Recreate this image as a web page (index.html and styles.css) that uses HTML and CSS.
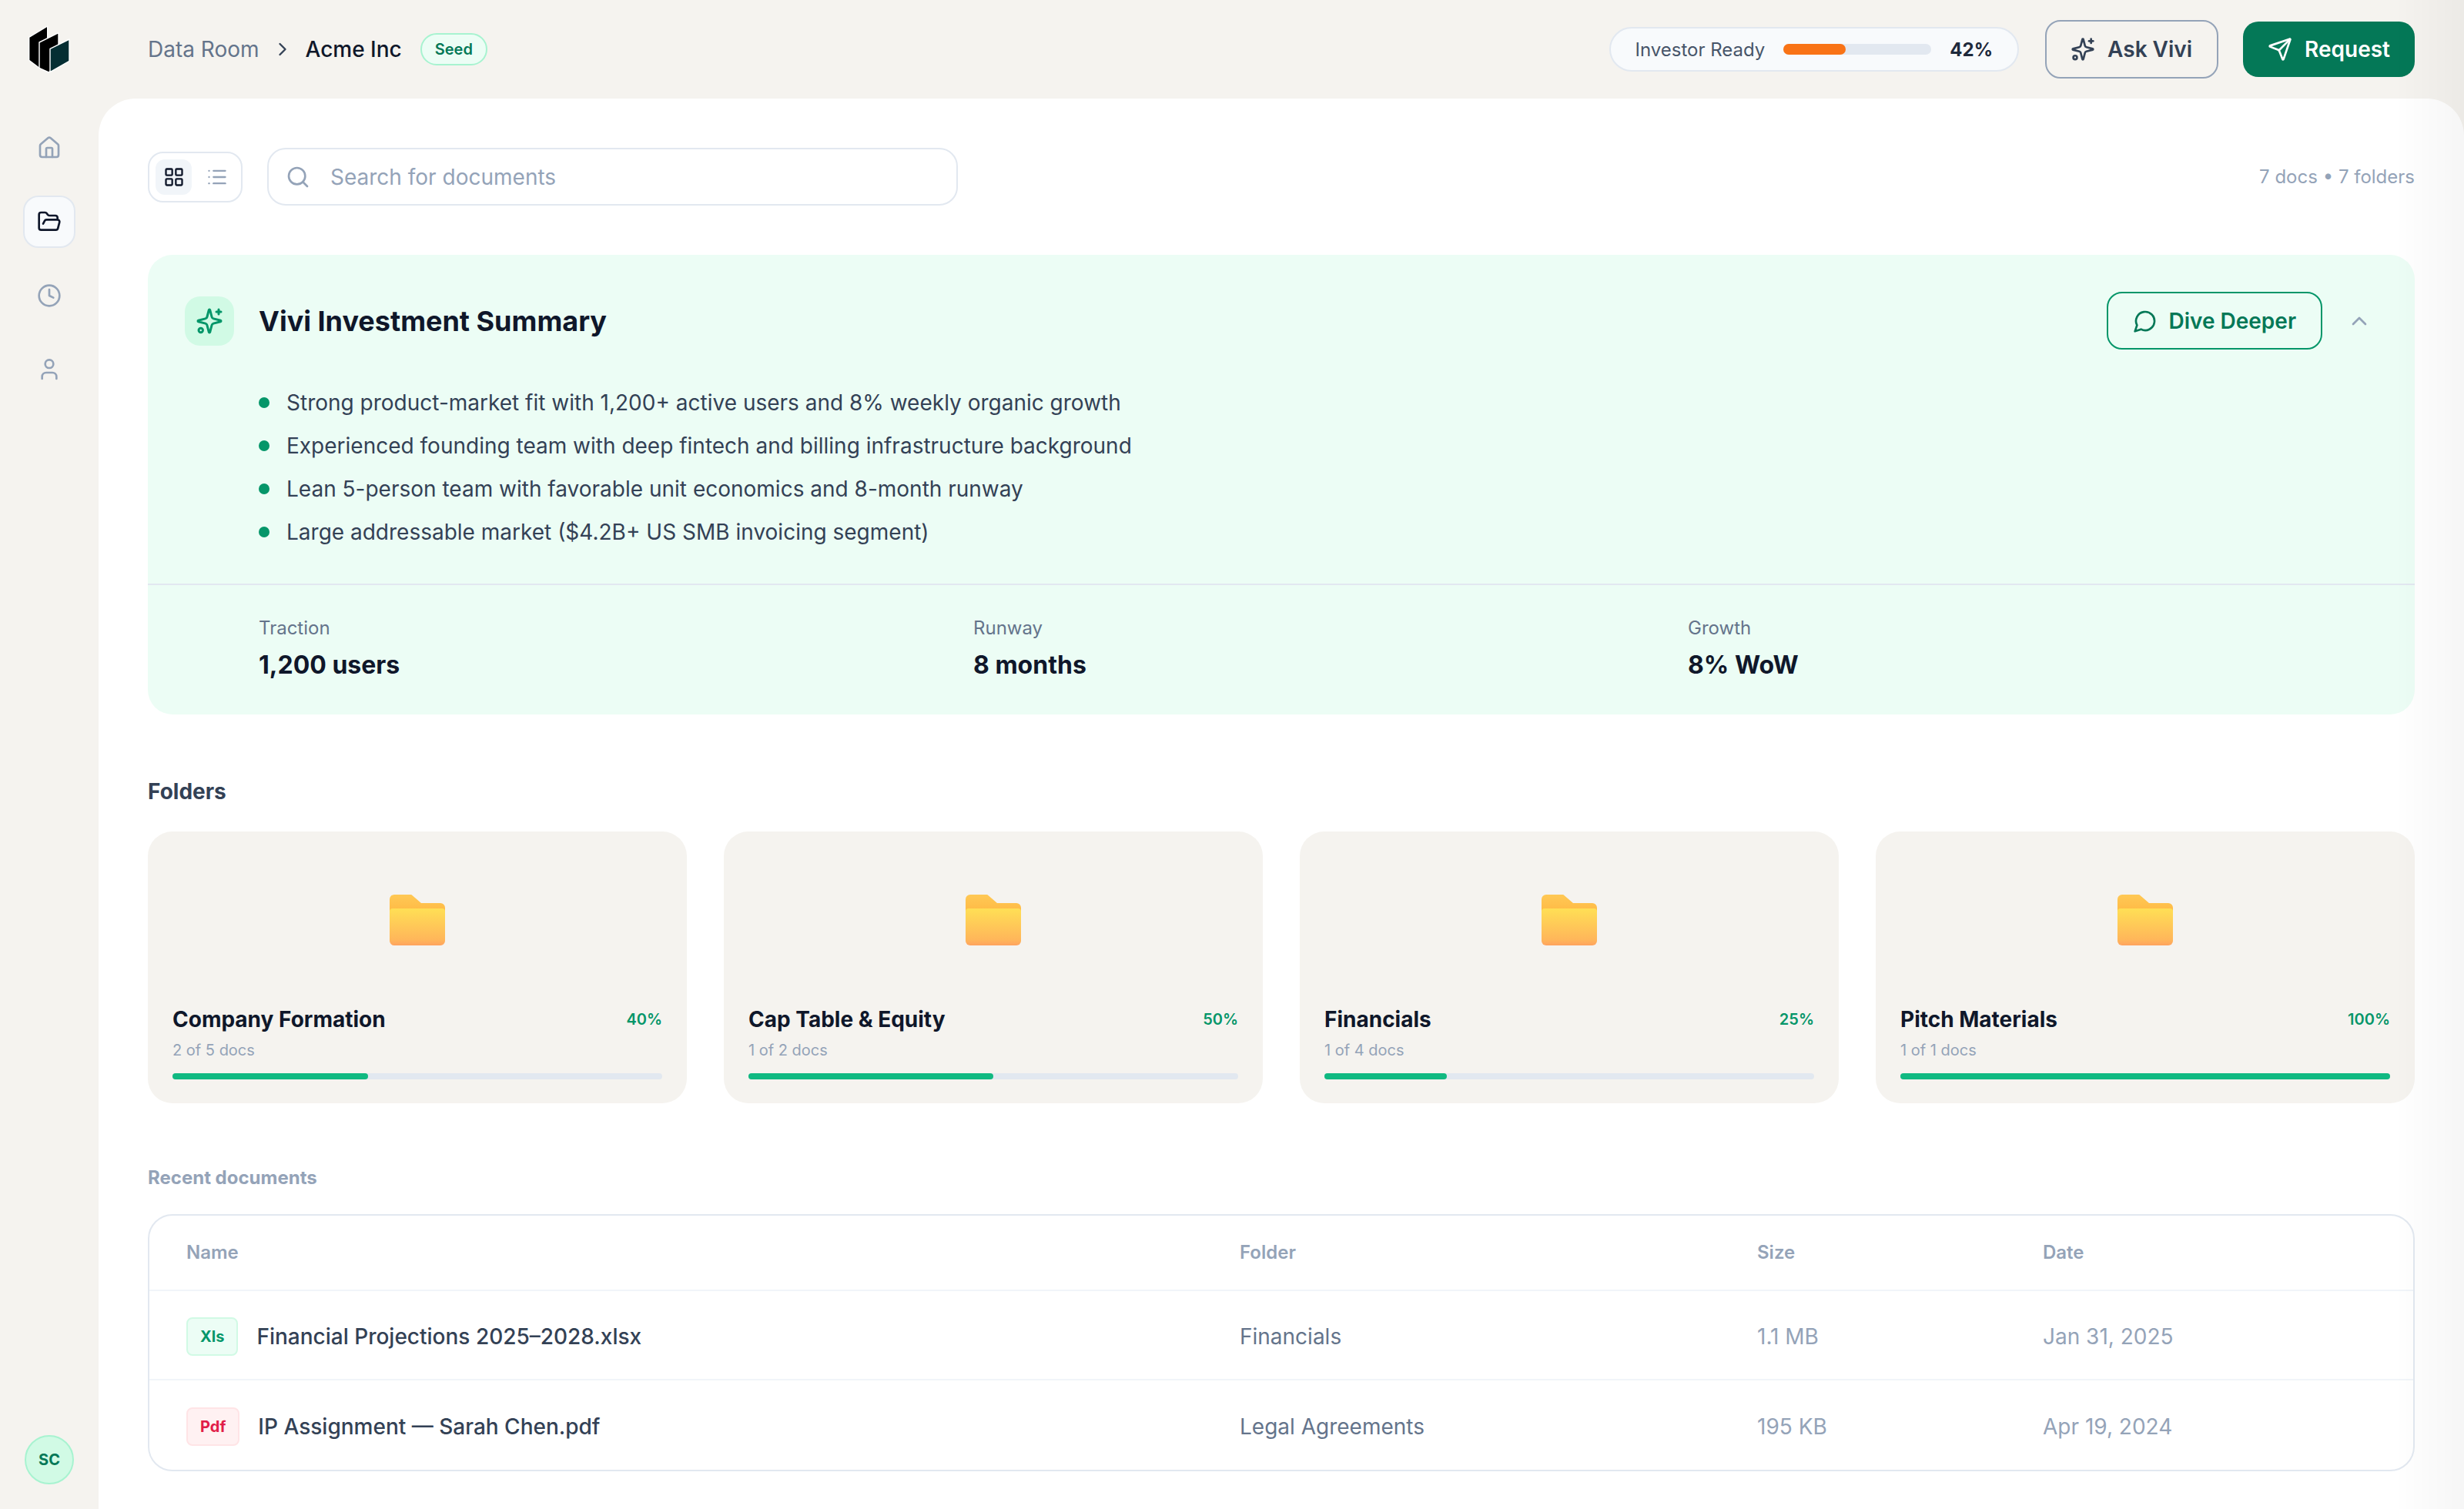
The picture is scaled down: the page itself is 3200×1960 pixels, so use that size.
FILE: index.html
```html
<!DOCTYPE html>
<html>
<head>
	<meta charset="utf-8">
	<title>Data Room</title>
	<link rel="stylesheet" href="styles.css">
</head>

<body>
	<svg class="defs" width="0" height="0">
		<defs>
			<linearGradient id="folder-back" x1="0" y1="0" x2="0" y2="1">
				<stop offset="0" stop-color="#ffc854"/>
				<stop offset="1" stop-color="#ffb13c"/>
			</linearGradient>
			<linearGradient id="folder-front" x1="0" y1="0" x2="0" y2="1">
				<stop offset="0" stop-color="#ffdf55"/>
				<stop offset="0.85" stop-color="#ffb65a"/>
				<stop offset="1" stop-color="#ffa35f"/>
			</linearGradient>
			<symbol id="sparkle" viewBox="0 0 24 24">
				<path d="M9.937 15.5A2 2 0 0 0 8.5 14.063l-6.135-1.582a.5.5 0 0 1 0-.962L8.5 9.936A2 2 0 0 0 9.937 8.5l1.582-6.135a.5.5 0 0 1 .963 0L14.063 8.5A2 2 0 0 0 15.5 9.937l6.135 1.581a.5.5 0 0 1 0 .964L15.5 14.063a2 2 0 0 0-1.437 1.437l-1.582 6.135a.5.5 0 0 1-.963 0z"/>
				<path d="M20 2v4"/>
				<path d="M22 4h-4"/>
				<circle cx="4.5" cy="20" r="1.8"/>
			</symbol>
			<symbol id="folder" viewBox="0 0 72 66">
				<path fill="url(#folder-back)" d="M0 6a6 6 0 0 1 6-6h21a4 4 0 0 1 3 1.4L41 11h25a6 6 0 0 1 6 6v20H0z"/>
				<path fill="url(#folder-front)" d="M0 22a4 4 0 0 1 4-4h64a4 4 0 0 1 4 4v38a6 6 0 0 1-6 6H6a6 6 0 0 1-6-6z"/>
			</symbol>
		</defs>
	</svg>

	<div class="app">
		<aside class="sidebar">
			<div class="logo">
				<svg viewBox="0 0 54 62" width="54" height="62">
					<g stroke="#fff" stroke-width="1.4" stroke-linejoin="round">
						<path fill="#000" d="M.7 15.3 24.7 1v39L14 55.3.7 45.3z"/>
						<path fill="#000" d="M14 22 39 9.7V50L26.3 61 14 55.3z"/>
						<path fill="#052e33" d="M28 30.3 53 18v28.3L28 60.6z"/>
					</g>
				</svg>
			</div>
			<nav class="side-nav">
				<a class="side-link">
					<svg class="icon" viewBox="0 0 24 24"><path d="M15 21v-8a1 1 0 0 0-1-1h-4a1 1 0 0 0-1 1v8"/><path d="M3 10a2 2 0 0 1 .709-1.528l7-5.999a2 2 0 0 1 2.582 0l7 5.999A2 2 0 0 1 21 10v9a2 2 0 0 1-2 2H5a2 2 0 0 1-2-2z"/></svg>
				</a>
				<a class="side-link active">
					<svg class="icon" viewBox="0 0 24 24"><path d="m6 14 1.5-2.9A2 2 0 0 1 9.24 10H20a2 2 0 0 1 1.94 2.5l-1.54 6a2 2 0 0 1-1.95 1.5H4a2 2 0 0 1-2-2V5a2 2 0 0 1 2-2h3.9a2 2 0 0 1 1.69.9l.81 1.2a2 2 0 0 0 1.69.9H18a2 2 0 0 1 2 2v2"/></svg>
				</a>
				<a class="side-link">
					<svg class="icon" viewBox="0 0 24 24"><circle cx="12" cy="12" r="10"/><path d="M12 6v6l4 2"/></svg>
				</a>
				<a class="side-link">
					<svg class="icon" viewBox="0 0 24 24"><path d="M19 21v-2a4 4 0 0 0-4-4H9a4 4 0 0 0-4 4v2"/><circle cx="12" cy="6.5" r="4"/></svg>
				</a>
			</nav>
			<div class="avatar">SC</div>
		</aside>

		<div class="main">
			<header class="topbar">
				<div class="crumbs">
					<span class="crumb">Data Room</span>
					<svg class="icon crumb-sep" viewBox="0 0 24 24"><path d="m9 18 6-6-6-6"/></svg>
					<span class="crumb-current">Acme Inc</span>
					<span class="stage-badge">Seed</span>
				</div>
				<div class="top-actions">
					<div class="ready-pill">
						<span class="ready-label">Investor Ready</span>
						<div class="ready-track"><div class="ready-fill" style="width: 42%"></div></div>
						<span class="ready-value">42%</span>
					</div>
					<button type="button" class="btn btn-outline">
						<svg class="icon"><use href="#sparkle"/></svg>
						Ask Vivi
					</button>
					<button type="button" class="btn btn-primary">
						<svg class="icon" viewBox="0 0 24 24"><path d="M14.536 21.686a.5.5 0 0 0 .937-.024l6.5-19a.496.496 0 0 0-.635-.635l-19 6.5a.5.5 0 0 0-.024.937l7.93 3.18a2 2 0 0 1 1.112 1.11z"/><path d="m21.854 2.147-10.94 10.939"/></svg>
						Request
					</button>
				</div>
			</header>

			<main class="panel">
				<div class="toolbar">
					<div class="view-toggle">
						<span class="view-btn active">
							<svg class="icon" viewBox="0 0 24 24"><rect x="3" y="3" width="7" height="7" rx="1"/><rect x="14" y="3" width="7" height="7" rx="1"/><rect x="3" y="14" width="7" height="7" rx="1"/><rect x="14" y="14" width="7" height="7" rx="1"/></svg>
						</span>
						<span class="view-btn">
							<svg class="icon" viewBox="0 0 24 24"><path d="M8 5h13"/><path d="M8 12h13"/><path d="M8 19h13"/><path d="M3 5h.01"/><path d="M3 12h.01"/><path d="M3 19h.01"/></svg>
						</span>
					</div>
					<div class="search">
						<svg class="icon" viewBox="0 0 24 24"><circle cx="11" cy="11" r="8"/><path d="m21 21-4.3-4.3"/></svg>
						<span class="search-placeholder">Search for documents</span>
					</div>
					<span class="counts">7 docs • 7 folders</span>
				</div>

				<section class="summary">
					<div class="summary-head">
						<span class="summary-icon"><svg class="icon"><use href="#sparkle"/></svg></span>
						<h2 class="summary-title">Vivi Investment Summary</h2>
						<button type="button" class="btn btn-dive">
							<svg class="icon" viewBox="0 0 24 24"><path d="M7.9 20A9 9 0 1 0 4 16.1L2 22Z"/></svg>
							Dive Deeper
						</button>
						<svg class="icon collapse" viewBox="0 0 24 24"><path d="m18 15-6-6-6 6"/></svg>
					</div>
					<ul class="summary-list">
						<li>Strong product-market fit with 1,200+ active users and 8% weekly organic growth</li>
						<li>Experienced founding team with deep fintech and billing infrastructure background</li>
						<li>Lean 5-person team with favorable unit economics and 8-month runway</li>
						<li>Large addressable market ($4.2B+ US SMB invoicing segment)</li>
					</ul>
					<div class="stats">
						<div>
							<div class="stat-label">Traction</div>
							<div class="stat-value">1,200 users</div>
						</div>
						<div>
							<div class="stat-label">Runway</div>
							<div class="stat-value">8 months</div>
						</div>
						<div>
							<div class="stat-label">Growth</div>
							<div class="stat-value">8% WoW</div>
						</div>
					</div>
				</section>

				<h3 class="folders-title">Folders</h3>
				<div class="folders">
					<div class="folder-card">
						<div class="folder-art"><svg width="72" height="66"><use href="#folder"/></svg></div>
						<div class="folder-row"><span class="folder-name">Company Formation</span><span class="folder-pct">40%</span></div>
						<div class="folder-docs">2 of 5 docs</div>
						<div class="folder-track"><div class="folder-fill" style="width: 40%"></div></div>
					</div>
					<div class="folder-card">
						<div class="folder-art"><svg width="72" height="66"><use href="#folder"/></svg></div>
						<div class="folder-row"><span class="folder-name">Cap Table &amp; Equity</span><span class="folder-pct">50%</span></div>
						<div class="folder-docs">1 of 2 docs</div>
						<div class="folder-track"><div class="folder-fill" style="width: 50%"></div></div>
					</div>
					<div class="folder-card">
						<div class="folder-art"><svg width="72" height="66"><use href="#folder"/></svg></div>
						<div class="folder-row"><span class="folder-name">Financials</span><span class="folder-pct">25%</span></div>
						<div class="folder-docs">1 of 4 docs</div>
						<div class="folder-track"><div class="folder-fill" style="width: 25%"></div></div>
					</div>
					<div class="folder-card">
						<div class="folder-art"><svg width="72" height="66"><use href="#folder"/></svg></div>
						<div class="folder-row"><span class="folder-name">Pitch Materials</span><span class="folder-pct">100%</span></div>
						<div class="folder-docs">1 of 1 docs</div>
						<div class="folder-track"><div class="folder-fill" style="width: 100%"></div></div>
					</div>
				</div>

				<h3 class="recent-title">Recent documents</h3>
				<div class="docs-table">
					<div class="docs-row docs-head">
						<span>Name</span>
						<span>Folder</span>
						<span>Size</span>
						<span>Date</span>
					</div>
					<div class="docs-row">
						<span class="doc-name"><span class="type-badge type-xls">Xls</span>Financial Projections 2025–2028.xlsx</span>
						<span class="doc-folder">Financials</span>
						<span class="doc-meta">1.1 MB</span>
						<span class="doc-meta">Jan 31, 2025</span>
					</div>
					<div class="docs-row">
						<span class="doc-name"><span class="type-badge type-pdf">Pdf</span>IP Assignment — Sarah Chen.pdf</span>
						<span class="doc-folder">Legal Agreements</span>
						<span class="doc-meta">195 KB</span>
						<span class="doc-meta">Apr 19, 2024</span>
					</div>
				</div>
			</main>
		</div>
	</div>
	<div class="edge-fade"></div>
</body>

</html>
```
FILE: styles.css
```css
*{
	box-sizing: border-box;
}

html, body{
	margin: 0;
	height: 100%;
	overflow: hidden;
}

body{
	background-color: #f5f3ef;
	font-family: Inter, "Liberation Sans", sans-serif;
	color: #0f172a;
}

.defs{
	position: absolute;
}

.icon{
	width: 32px;
	height: 32px;
	flex: none;
	fill: none;
	stroke: currentColor;
	stroke-width: 2;
	stroke-linecap: round;
	stroke-linejoin: round;
}

.app{
	display: flex;
	height: 1960px;
}

/* soft shade along the right edge of the window */
.edge-fade{
	position: fixed;
	top: 0;
	right: 0;
	bottom: 0;
	width: 90px;
	background: linear-gradient(to right, rgba(0, 0, 0, 0), rgba(0, 0, 0, 0.035));
	pointer-events: none;
}

/* sidebar */
.sidebar{
	width: 128px;
	flex: none;
	display: flex;
	flex-direction: column;
	align-items: center;
	padding-bottom: 32px;
}

.logo{
	height: 128px;
	padding-top: 33px;
}

.logo svg{
	display: block;
}

.side-nav{
	display: flex;
	flex-direction: column;
	gap: 28px;
	margin-top: 30px;
}

.side-link{
	width: 68px;
	height: 68px;
	display: flex;
	align-items: center;
	justify-content: center;
	border: 2px solid transparent;
	border-radius: 20px;
	color: #94a3b8;
}

.side-link.active{
	background-color: #f8fafc;
	border-color: #e2e8f0;
	color: #0f172a;
}

.avatar{
	width: 64px;
	height: 64px;
	margin-top: auto;
	display: flex;
	align-items: center;
	justify-content: center;
	background-color: #d1fae5;
	border: 2px solid #a7f3d0;
	border-radius: 50%;
	color: #047857;
	font-size: 20px;
	font-weight: 700;
}

/* top bar */
.main{
	flex: 1;
	min-width: 0;
	display: flex;
	flex-direction: column;
}

.topbar{
	height: 128px;
	flex: none;
	display: flex;
	align-items: center;
	justify-content: space-between;
	padding: 0 64px;
}

.crumbs{
	display: flex;
	align-items: center;
	font-size: 28px;
}

.crumb{
	color: #64748b;
}

.crumb-sep{
	width: 28px;
	height: 28px;
	margin: 0 16px;
	color: #334155;
}

.crumb-current{
	font-weight: 500;
}

.stage-badge{
	height: 42px;
	margin-left: 24px;
	padding: 0 17px;
	display: flex;
	align-items: center;
	background-color: #ecfdf5;
	border: 2px solid #a7f3d0;
	border-radius: 21px;
	color: #047857;
	font-size: 20px;
	font-weight: 600;
}

.top-actions{
	display: flex;
	align-items: center;
}

.ready-pill{
	height: 58px;
	margin-right: 34px;
	padding: 0 32px;
	display: flex;
	align-items: center;
	gap: 24px;
	white-space: nowrap;
	background-color: #f8fafc;
	border: 2px solid #e2e8f0;
	border-radius: 29px;
}

.ready-label{
	color: #475569;
	font-size: 24px;
}

.ready-track{
	width: 192px;
	height: 14px;
	flex: none;
	background-color: #e2e8f0;
	border-radius: 7px;
}

.ready-fill{
	height: 100%;
	background-color: #f97316;
	border-radius: 7px;
}

.ready-value{
	color: #1e293b;
	font-size: 24px;
	font-weight: 700;
}

.btn{
	display: flex;
	align-items: center;
	gap: 16px;
	font-family: inherit;
	font-size: 28px;
	font-weight: 600;
	border-radius: 20px;
	background: none;
}

.btn-outline{
	height: 76px;
	padding: 0 32px 0 31px;
	border: 2px solid #94a3b8;
	color: #334155;
}

.btn-primary{
	height: 72px;
	margin-left: 32px;
	padding: 0 32px;
	border: none;
	background-color: #047857;
	color: #fff;
}

/* content panel */
.panel{
	flex: 1;
	padding: 64px 64px 0;
	background-color: #fff;
	border-radius: 48px 48px 0 0;
	overflow: hidden;
}

.toolbar{
	display: flex;
	align-items: center;
	height: 75px;
}

.view-toggle{
	width: 123px;
	height: 66px;
	padding: 8px;
	display: flex;
	justify-content: space-between;
	border: 2px solid #e2e8f0;
	border-radius: 20px;
}

.view-btn{
	width: 47px;
	height: 46px;
	display: flex;
	align-items: center;
	justify-content: center;
	border-radius: 12px;
	color: #94a3b8;
}

.view-btn.active{
	background-color: #f1f5f9;
	color: #0f172a;
}

.view-btn .icon{
	width: 28px;
	height: 28px;
}

.search{
	width: 897px;
	height: 75px;
	margin-left: 32px;
	padding: 0 22px;
	display: flex;
	align-items: center;
	gap: 26px;
	border: 2px solid #e2e8f0;
	border-radius: 24px;
	color: #94a3b8;
}

.search-placeholder{
	font-size: 28px;
}

.counts{
	margin-left: auto;
	color: #94a3b8;
	font-size: 24px;
}

/* summary */
.summary{
	margin-top: 64px;
	background-color: #ecfdf5;
	border-radius: 32px;
}

.summary-head{
	display: flex;
	align-items: center;
	padding: 48px 48px 0;
}

.summary-icon{
	width: 64px;
	height: 64px;
	display: flex;
	align-items: center;
	justify-content: center;
	background-color: #d1fae5;
	border-radius: 20px;
	color: #059669;
}

.summary-icon .icon{
	width: 36px;
	height: 36px;
}

.summary-title{
	margin: 0 auto 0 32px;
	font-size: 36px;
	font-weight: 700;
}

.btn-dive{
	height: 75px;
	padding: 0 32px;
	gap: 14px;
	background-color: #ecfdf5;
	border: 2px solid #059669;
	color: #047857;
}

.collapse{
	margin-left: 32px;
	margin-right: 8px;
	color: #94a3b8;
}

.summary-list{
	list-style: none;
	margin: 41px 0 39px;
	padding: 0 0 0 144px;
}

.summary-list li{
	position: relative;
	padding-left: 36px;
	color: #334155;
	font-size: 28px;
	line-height: 56px;
}

.summary-list li::before{
	content: "";
	position: absolute;
	left: 0;
	top: 21px;
	width: 14px;
	height: 14px;
	background-color: #059669;
	border-radius: 50%;
}

.stats{
	display: grid;
	grid-template-columns: repeat(3, 1fr);
	gap: 32px;
	padding: 42px 48px 40px 144px;
	border-top: 2px solid #e2e8f0;
}

.stat-label{
	margin-bottom: 10px;
	color: #64748b;
	font-size: 24px;
	line-height: 28px;
}

.stat-value{
	font-size: 32px;
	font-weight: 700;
	line-height: 48px;
}

/* folders */
.folders-title{
	margin: 80px 0 32px;
	color: #334155;
	font-size: 28px;
	font-weight: 700;
	line-height: 40px;
}

.folders{
	display: grid;
	grid-template-columns: repeat(4, 1fr);
	gap: 48px;
}

.folder-card{
	padding: 32px 32px 31px;
	background-color: #f5f3ef;
	border-radius: 32px;
}

.folder-art{
	height: 192px;
	padding-bottom: 26px;
	display: flex;
	align-items: center;
	justify-content: center;
}

.folder-row{
	display: flex;
	align-items: center;
	justify-content: space-between;
	line-height: 40px;
}

.folder-name{
	font-size: 28px;
	font-weight: 700;
}

.folder-pct{
	color: #059669;
	font-size: 20px;
	font-weight: 600;
}

.folder-docs{
	margin-top: 8px;
	color: #94a3b8;
	font-size: 20px;
	line-height: 24px;
}

.folder-track{
	height: 8px;
	margin-top: 18px;
	background-color: #e2e8f0;
	border-radius: 4px;
}

.folder-fill{
	height: 100%;
	background-color: #10b981;
	border-radius: 4px;
}

/* recent documents */
.recent-title{
	margin: 81px 0 31px;
	color: #94a3b8;
	font-size: 24px;
	font-weight: 700;
	line-height: 32px;
}

.docs-table{
	border: 2px solid #e2e8f0;
	border-radius: 32px;
	overflow: hidden;
}

.docs-row{
	display: grid;
	grid-template-columns: 1368px 672px 371px 1fr;
	align-items: center;
	height: 116px;
	padding: 3px 48px 0;
	border-bottom: 2px solid #f1f5f9;
	font-size: 28px;
}

.docs-row:last-child{
	border-bottom: none;
}

.docs-head{
	height: 98px;
	padding: 0 48px 2px;
	color: #94a3b8;
	font-size: 24px;
	font-weight: 600;
}

.doc-name{
	display: flex;
	align-items: center;
	gap: 24px;
	color: #334155;
	font-weight: 500;
}

.type-badge{
	height: 50px;
	padding: 0 16px;
	display: flex;
	align-items: center;
	border: 2px solid;
	border-radius: 8px;
	font-size: 20px;
	font-weight: 700;
}

.type-xls{
	background-color: #ecfdf5;
	border-color: #d1fae5;
	color: #059669;
}

.type-pdf{
	background-color: #fff1f2;
	border-color: #ffe4e6;
	color: #e11d48;
}

.doc-folder{
	color: #64748b;
}

.doc-meta{
	color: #94a3b8;
}
```
